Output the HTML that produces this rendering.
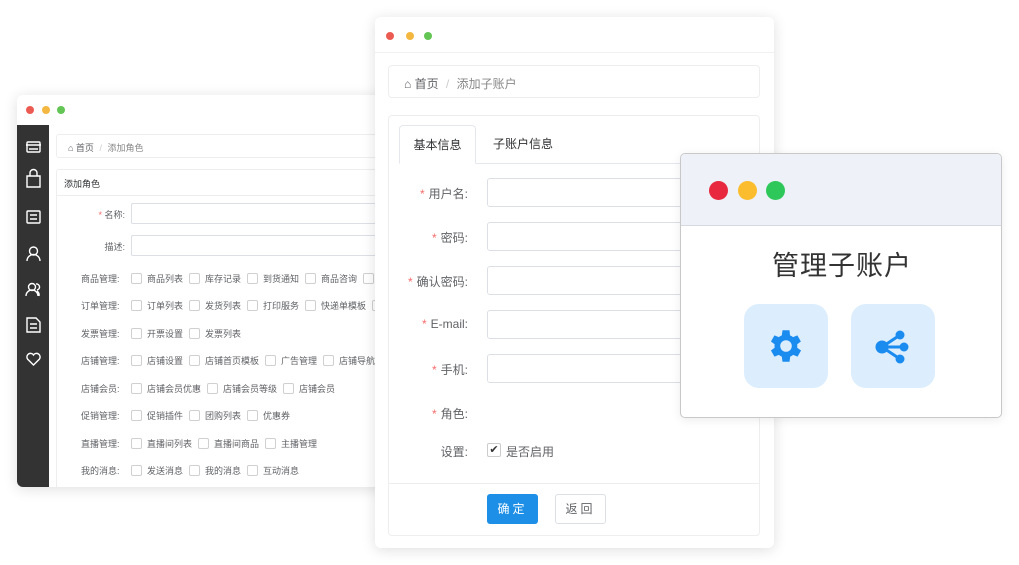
<!DOCTYPE html>
<html><head><meta charset="utf-8"><style>
*{box-sizing:border-box;margin:0;padding:0}
body{width:1019px;height:565px;background:#fff;position:relative;overflow:hidden;font-family:"Liberation Sans","Noto Sans CJK SC",sans-serif;color:#606266}
.abs{position:absolute}
.dot{position:absolute;border-radius:50%}
.win{position:absolute;background:#fff;border-radius:6px;box-shadow:0 2px 14px rgba(0,0,0,.13)}
.cb{display:inline-block;width:11px;height:11px;border:1px solid #d0d0d0;border-radius:2px;vertical-align:-2px;margin-right:5px;background:#fff}
.lrow{position:absolute;left:64px;font-size:9px;color:#606266;white-space:nowrap}
.lrow b{font-weight:normal;display:inline-block;width:50px}
.lrow span{margin-right:6px}
.lbl{position:absolute;width:93px;text-align:right;font-size:12px;color:#606266}
.lbl i{font-style:normal;color:#f56c6c;margin-right:4px}
.inp{position:absolute;left:112px;width:300px;height:29px;border:1px solid #dcdfe6;border-radius:3px;background:#fff}
</style></head><body>

<!-- left window -->
<div class="win" style="left:17px;top:95px;width:380px;height:392px;overflow:hidden;border-radius:6px 0 0 6px">
  <div class="dot" style="left:9px;top:11px;width:8px;height:8px;background:#ec5b52"></div>
  <div class="dot" style="left:25px;top:11px;width:8px;height:8px;background:#f4b73f"></div>
  <div class="dot" style="left:40px;top:11px;width:8px;height:8px;background:#62c554"></div>
  <div class="abs" style="left:0;top:30px;width:32px;height:362px;background:#333"></div>
  <svg class="abs" style="left:0;top:30px" width="32" height="260" fill="none" stroke="#fff" stroke-width="1.4">
    <rect x="10" y="17" width="13" height="10" rx="1"/><path d="M9 20h15M12 24h9"/>
    <path d="M10 51h13v11H10zM13 51v-3a3.5 3.5 0 0 1 7 0v3"/>
    <rect x="10" y="86" width="13" height="12" rx="1"/><path d="M13 90h7M13 94h7"/>
    <circle cx="16.5" cy="126" r="4"/><path d="M10 136a6.5 6.5 0 0 1 13 0"/>
    <circle cx="15" cy="162" r="3.5"/><path d="M9 171a6 6 0 0 1 12 0M19 159a3 3 0 0 1 1 6M22 171a5 5 0 0 0-2-5"/>
    <path d="M10 193h9l4 4v10H10z M13 199h7M13 203h7"/>
    <path d="M16.5 240l-6-6a3.5 3.5 0 0 1 6-4a3.5 3.5 0 0 1 6 4z"/>
  </svg>
  <div class="abs" style="left:39px;top:39px;width:345px;height:24px;border:1px solid #eee;border-radius:3px;font-size:9px;padding:6px 0 0 11px;color:#606266">⌂ 首页 <span style="color:#ccc;margin:0 3px">/</span> <span style="color:#888">添加角色</span></div>
  <div class="abs" style="left:39px;top:74px;width:345px;height:330px;border:1px solid #eee;border-radius:3px"></div>
  <div class="abs" style="left:39px;top:100px;width:345px;border-top:1px solid #eee"></div>
  <div class="abs" style="left:47px;top:82px;font-size:9px;color:#303133">添加角色</div>
  <div class="abs" style="left:70px;top:113px;font-size:9px;width:38px;text-align:right"><span style="color:#f56c6c">*</span> 名称:</div>
  <div class="abs" style="left:114px;top:108px;width:270px;height:21px;border:1px solid #dcdfe6;border-radius:2px"></div>
  <div class="abs" style="left:70px;top:145px;font-size:9px;width:38px;text-align:right">描述:</div>
  <div class="abs" style="left:114px;top:140px;width:270px;height:21px;border:1px solid #dcdfe6;border-radius:2px"></div>
  <div class="lrow" style="top:177px"><b>商品管理:</b><span><i class="cb"></i>商品列表</span><span><i class="cb"></i>库存记录</span><span><i class="cb"></i>到货通知</span><span><i class="cb"></i>商品咨询</span><span><i class="cb"></i>商</span></div>
  <div class="lrow" style="top:204px"><b>订单管理:</b><span><i class="cb"></i>订单列表</span><span><i class="cb"></i>发货列表</span><span><i class="cb"></i>打印服务</span><span><i class="cb"></i>快递单模板</span><span><i class="cb"></i></span></div>
  <div class="lrow" style="top:232px"><b>发票管理:</b><span><i class="cb"></i>开票设置</span><span><i class="cb"></i>发票列表</span></div>
  <div class="lrow" style="top:259px"><b>店铺管理:</b><span><i class="cb"></i>店铺设置</span><span><i class="cb"></i>店铺首页模板</span><span><i class="cb"></i>广告管理</span><span><i class="cb"></i>店铺导航管理</span></div>
  <div class="lrow" style="top:287px"><b>店铺会员:</b><span><i class="cb"></i>店铺会员优惠</span><span><i class="cb"></i>店铺会员等级</span><span><i class="cb"></i>店铺会员</span></div>
  <div class="lrow" style="top:314px"><b>促销管理:</b><span><i class="cb"></i>促销插件</span><span><i class="cb"></i>团购列表</span><span><i class="cb"></i>优惠券</span></div>
  <div class="lrow" style="top:342px"><b>直播管理:</b><span><i class="cb"></i>直播间列表</span><span><i class="cb"></i>直播间商品</span><span><i class="cb"></i>主播管理</span></div>
  <div class="lrow" style="top:369px"><b>我的消息:</b><span><i class="cb"></i>发送消息</span><span><i class="cb"></i>我的消息</span><span><i class="cb"></i>互动消息</span></div>
</div>

<!-- middle window -->
<div class="win" style="left:375px;top:17px;width:399px;height:531px">
  <div class="dot" style="left:11px;top:15px;width:8px;height:8px;background:#ec5b52"></div>
  <div class="dot" style="left:31px;top:15px;width:8px;height:8px;background:#f4b73f"></div>
  <div class="dot" style="left:49px;top:15px;width:8px;height:8px;background:#62c554"></div>
  <div class="abs" style="left:0;top:35px;width:399px;border-top:1px solid #f0f0f0"></div>
  <div class="abs" style="left:13px;top:48px;width:372px;height:33px;border:1px solid #eee;border-radius:4px;font-size:12px;padding:9px 0 0 15px;color:#606266">⌂ 首页 <span style="color:#ccc;margin:0 4px">/</span> <span style="color:#888">添加子账户</span></div>
  <div class="abs" style="left:13px;top:98px;width:372px;height:421px;border:1px solid #eee;border-radius:4px"></div>
  <div class="abs" style="left:24px;top:146px;width:361px;border-top:1px solid #e4e7ed"></div>
  <div class="abs" style="left:24px;top:108px;width:77px;height:39px;border:1px solid #e4e7ed;border-bottom:1px solid #fff;border-radius:4px 4px 0 0;background:#fff;font-size:12px;color:#303133;text-align:center;line-height:38px">基本信息</div>
  <div class="abs" style="left:118px;top:108px;font-size:12px;color:#303133;line-height:38px">子账户信息</div>
  <div class="lbl" style="left:0;top:168px"><i>*</i>用户名:</div><div class="inp" style="top:161px"></div>
  <div class="lbl" style="left:0;top:212px"><i>*</i>密码:</div><div class="inp" style="top:205px"></div>
  <div class="lbl" style="left:0;top:256px"><i>*</i>确认密码:</div><div class="inp" style="top:249px"></div>
  <div class="lbl" style="left:0;top:300px"><i>*</i>E-mail:</div><div class="inp" style="top:293px"></div>
  <div class="lbl" style="left:0;top:344px"><i>*</i>手机:</div><div class="inp" style="top:337px"></div>
  <div class="lbl" style="left:0;top:388px"><i>*</i>角色:</div>
  <div class="lbl" style="left:0;top:426px">设置:</div>
  <div class="abs" style="left:112px;top:426px;width:14px;height:14px;border:1px solid #ccc;border-radius:2px;font-size:11px;line-height:12px;text-align:center;color:#333">✔</div>
  <div class="abs" style="left:131px;top:426px;font-size:12px;color:#606266">是否启用</div>
  <div class="abs" style="left:14px;top:466px;width:370px;border-top:1px solid #eee"></div>
  <div class="abs" style="left:112px;top:477px;width:51px;height:30px;background:#1e8fe6;border-radius:3px;color:#fff;font-size:12px;text-align:center;line-height:30px;letter-spacing:3px">确定</div>
  <div class="abs" style="left:180px;top:477px;width:51px;height:30px;border:1px solid #dcdfe6;border-radius:3px;color:#606266;font-size:12px;text-align:center;line-height:28px;letter-spacing:3px">返回</div>
</div>

<!-- right window -->
<div class="abs" style="left:680px;top:153px;width:322px;height:265px;background:#fff;border:1px solid #c8c8c8;border-radius:5px;overflow:hidden;box-shadow:0 2px 10px rgba(0,0,0,.08)">
  <div class="abs" style="left:0;top:0;width:322px;height:72px;background:#eef1f7;border-bottom:1px solid #d6d9de"></div>
  <div class="dot" style="left:28px;top:27px;width:19px;height:19px;background:#e8283e"></div>
  <div class="dot" style="left:57px;top:27px;width:19px;height:19px;background:#fbbd2d"></div>
  <div class="dot" style="left:85px;top:27px;width:19px;height:19px;background:#2ec85a"></div>
  <div class="abs" style="left:0;top:90px;width:322px;text-align:center;font-size:27px;color:#333;letter-spacing:1px">管理子账户</div>
  <div class="abs" style="left:63px;top:150px;width:84px;height:84px;background:#dcedfd;border-radius:15px"></div>
  <div class="abs" style="left:170px;top:150px;width:84px;height:84px;background:#dcedfd;border-radius:15px"></div>
  <svg class="abs" style="left:84px;top:171px" width="42" height="42" viewBox="0 0 24 24"><path fill="#1a8cf0" d="M19.4 13a7.5 7.5 0 0 0 0-2l2.1-1.6-2-3.5-2.5 1a7.6 7.6 0 0 0-1.7-1L15 3h-4l-.4 2.9a7.6 7.6 0 0 0-1.7 1l-2.5-1-2 3.5L6.5 11a7.5 7.5 0 0 0 0 2l-2.1 1.6 2 3.5 2.5-1a7.6 7.6 0 0 0 1.7 1L11 21h4l.4-2.9a7.6 7.6 0 0 0 1.7-1l2.5 1 2-3.5zM13 15.3a3.3 3.3 0 1 1 0-6.6 3.3 3.3 0 0 1 0 6.6z" transform="translate(-1 0)"/></svg>
  <svg class="abs" style="left:190px;top:172px" width="42" height="42" viewBox="0 0 42 42" fill="#1a8cf0" stroke="#1a8cf0" stroke-width="3"><circle cx="11" cy="21" r="6.5" stroke="none"/><circle cx="29" cy="9" r="4.5" stroke="none"/><circle cx="33" cy="21" r="4.5" stroke="none"/><circle cx="29" cy="33" r="4.5" stroke="none"/><path d="M11 21L29 9M11 21h22M11 21l18 12" fill="none"/></svg>
</div>
</body></html>
